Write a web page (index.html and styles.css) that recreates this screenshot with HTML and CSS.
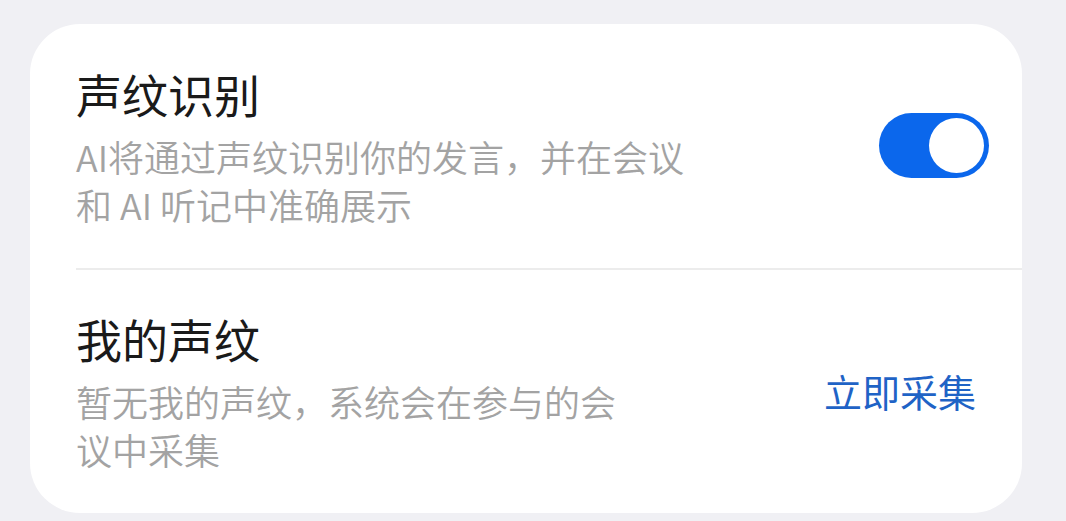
FILE: index.html
```html
<!DOCTYPE html>
<html lang="zh-CN">
<head>
<meta charset="utf-8">
<link rel="stylesheet" href="styles.css">
</head>
<body>
<div class="card">
  <div class="row row-first">
    <div class="text text-wide">
      <div class="title">声纹识别</div>
      <div class="desc">AI将通过声纹识别你的发言，并在会议和 AI 听记中准确展示</div>
    </div>
    <div class="toggle"><div class="knob"></div></div>
  </div>
  <div class="divider"></div>
  <div class="row row-second">
    <div class="text text-narrow">
      <div class="title">我的声纹</div>
      <div class="desc">暂无我的声纹，系统会在参与的会议中采集</div>
    </div>
    <div class="link">立即采集</div>
  </div>
</div>
</body>
</html>
```
FILE: styles.css
```css
html, body {
  margin: 0;
  padding: 0;
  background: #f0f0f4;
}
body {
  padding: 24px 44px 0 30px;
  font-family: "Noto Sans CJK SC", "Noto Sans", sans-serif;
}
.card {
  background: #ffffff;
  border-radius: 50px;
  width: 992px;
  height: 489px;
  box-sizing: border-box;
  padding-left: 46px;
}
.row {
  display: flex;
  align-items: center;
  justify-content: space-between;
}
.row-first {
  padding: 39px 33px 40px 0;
}
.row-second {
  padding: 38px 46px 0 0;
}
.text-wide {
  width: 625px;
}
.text-narrow {
  width: 560px;
}
.title {
  font-size: 46px;
  line-height: 60px;
  color: #1a1a1a;
  font-weight: 400;
  margin-bottom: 9px;
}
.desc {
  font-size: 36px;
  line-height: 48px;
  color: #a3a3a3;
  font-weight: 350;
}
.divider {
  height: 2px;
  background: #ececec;
}
.toggle {
  width: 110px;
  height: 65px;
  border-radius: 33px;
  background: #0b67ec;
  display: flex;
  align-items: center;
  justify-content: flex-end;
  padding-right: 5px;
  box-sizing: border-box;
}
.knob {
  width: 55px;
  height: 55px;
  border-radius: 50%;
  background: #ffffff;
}
.link {
  font-size: 38px;
  color: #1f63c6;
  line-height: 48px;
  font-weight: 400;
}
```
